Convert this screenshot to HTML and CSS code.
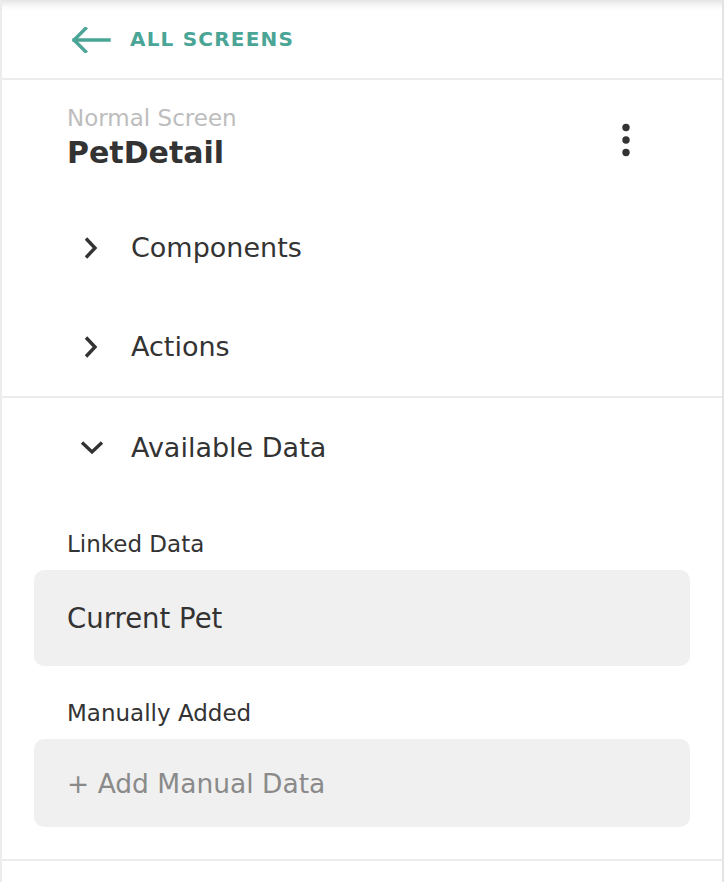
FILE: index.html
```html
<!DOCTYPE html>
<html>
<head>
<meta charset="utf-8">
<link rel="stylesheet" href="styles.css">
</head>
<body>
<div class="panel">
  <header class="topbar">
    <svg class="back-icon" width="40" height="26" viewBox="0 0 40 26">
      <path d="M3 13 H38 M14.5 1.5 L3 13 L14.5 24.5" fill="none" stroke="#4aa596" stroke-width="3.4" stroke-linecap="square"/>
    </svg>
    <span class="back-label">ALL SCREENS</span>
  </header>

  <section class="screen">
    <div class="title-row">
      <div class="title-text">
        <div class="kind">Normal Screen</div>
        <div class="name">PetDetail</div>
      </div>
      <svg class="kebab" width="10" height="34" viewBox="0 0 10 34">
        <circle cx="5" cy="4.5" r="3.7" fill="#333"/>
        <circle cx="5" cy="17" r="3.7" fill="#333"/>
        <circle cx="5" cy="29.5" r="3.7" fill="#333"/>
      </svg>
    </div>
    <div class="row">
      <svg class="chev" width="24" height="24" viewBox="0 0 24 24">
        <path d="M6 2.5 L15 12 L6 21.5" fill="none" stroke="#333" stroke-width="3.4"/>
      </svg>
      <span class="row-label">Components</span>
    </div>
    <div class="row">
      <svg class="chev" width="24" height="24" viewBox="0 0 24 24">
        <path d="M6 2.5 L15 12 L6 21.5" fill="none" stroke="#333" stroke-width="3.4"/>
      </svg>
      <span class="row-label">Actions</span>
    </div>
  </section>

  <section class="data">
    <div class="row">
      <svg class="chev down" width="24" height="24" viewBox="0 0 24 24">
        <path d="M2 6.5 L12 16 L22 6.5" fill="none" stroke="#333" stroke-width="3.4"/>
      </svg>
      <span class="row-label">Available Data</span>
    </div>
    <div class="field-label first">Linked Data</div>
    <div class="box linked">Current Pet</div>
    <div class="field-label">Manually Added</div>
    <div class="box add">+ Add Manual Data</div>
  </section>
</div>
</body>
</html>
```

FILE: styles.css
```css
html, body {
  margin: 0;
  padding: 0;
  background: #ffffff;
}

body {
  font-family: "DejaVu Sans", "Liberation Sans", sans-serif;
  color: #333333;
}

.panel {
  width: 720px;
  border-left: 2px solid #ececec;
  border-right: 2px solid #e4e4e4;
  background: #ffffff;
  box-shadow: inset 0 10px 10px -8px rgba(0, 0, 0, 0.16);
  min-height: 882px;
  box-sizing: content-box;
}

.topbar {
  height: 78px;
  border-bottom: 2px solid #ececec;
  display: flex;
  align-items: center;
  padding-left: 69px;
}

.back-icon {
  display: block;
  margin-top: 1px;
}

.back-label {
  margin-left: 19px;
  font-weight: bold;
  font-size: 20px;
  letter-spacing: 1.2px;
  color: #4aa596;
  line-height: 26px;
}

.screen {
  border-bottom: 2px solid #ececec;
}

.title-row {
  display: flex;
  align-items: center;
  justify-content: space-between;
  padding: 25px 91px 0 65px;
  height: 70px;
  margin-bottom: 23px;
}

.kind {
  font-size: 23px;
  line-height: 26px;
  color: #bdbdbd;
}

.name {
  font-size: 30px;
  font-weight: bold;
  line-height: 44px;
  color: #333333;
}

.kebab {
  display: block;
}

.row {
  height: 99px;
  display: flex;
  align-items: center;
  padding-left: 78px;
}

.data .row {
  height: 100px;
}

.chev {
  display: block;
  flex: none;
}

.row-label {
  margin-left: 27px;
  font-size: 27px;
  line-height: 32px;
  color: #333333;
}

.field-label {
  font-size: 23px;
  line-height: 26px;
  padding-left: 65px;
  margin-top: 34px;
  margin-bottom: 13px;
  color: #333333;
}

.field-label.first {
  margin-top: 33px;
}

.box {
  margin: 0 32px;
  background: #f0f0f0;
  border-radius: 10px;
  display: flex;
  align-items: center;
  padding-left: 33px;
  font-size: 27px;
}

.box.linked {
  height: 96px;
  color: #333333;
  font-size: 27.5px;
}

.box.add {
  height: 88px;
  color: #8a8a8a;
  font-size: 26.5px;
}

.data {
  padding-bottom: 32px;
  border-bottom: 2px solid #ececec;
}
```
